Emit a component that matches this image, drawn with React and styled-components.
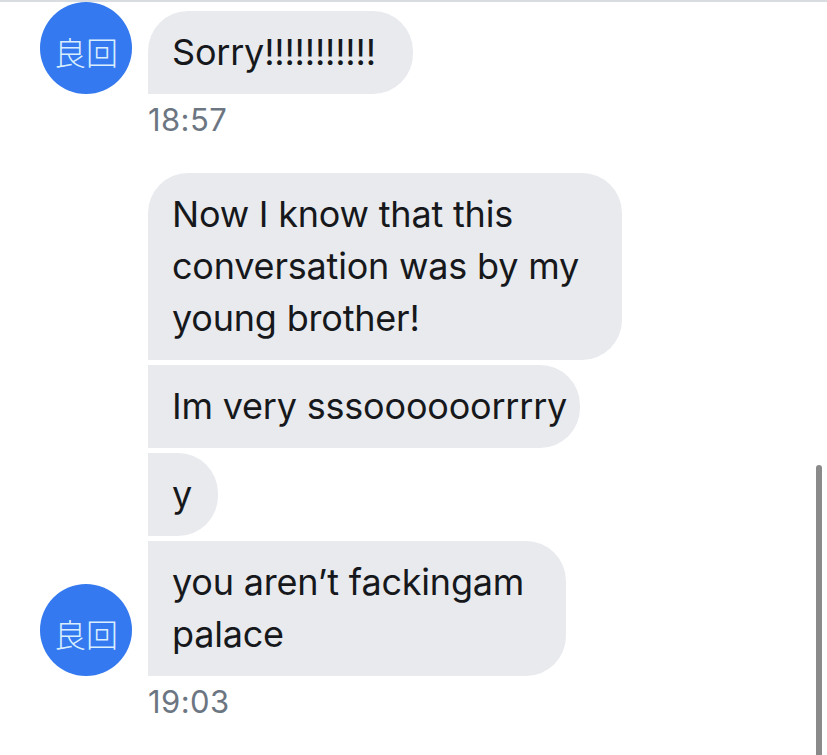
import React from "react";
import styled, { createGlobalStyle } from "styled-components";

const Global = createGlobalStyle`
  html, body {
    margin: 0;
    padding: 0;
    background: #ffffff;
    overflow: hidden;
  }
  body {
    font-family: Inter, "Noto Sans", "Liberation Sans", sans-serif;
    -webkit-font-smoothing: antialiased;
  }
`;

const Screen = styled.div`
  position: relative;
  width: 827px;
  height: 755px;
  box-sizing: border-box;
  border-top: 2px solid #d9dde2;
  display: flex;
  flex-direction: column;
  gap: 35px;
  overflow: hidden;
`;

const Group = styled.div`
  display: flex;
  flex-direction: column;
`;

const Row = styled.div`
  display: flex;
  align-items: flex-end;
  gap: 16px;
  padding-left: 40px;
`;

const Avatar = styled.div`
  flex: 0 0 auto;
  width: 92px;
  height: 92px;
  border-radius: 50%;
  background: #3479ef;
  color: #d9eeff;
  display: flex;
  align-items: center;
  justify-content: center;
  font-family: "Noto Sans CJK JP", "Noto Sans CJK SC", sans-serif;
  font-weight: 300;
  font-size: 32px;
  line-height: 1;
  padding-top: 6px;
  box-sizing: border-box;
`;

const Stack = styled.div`
  display: flex;
  flex-direction: column;
  align-items: flex-start;
  gap: 5px;
`;

const Bubble = styled.div`
  box-sizing: border-box;
  width: ${(p) => p.$width}px;
  background: #e8eaee;
  color: #16181b;
  font-size: 36px;
  line-height: 52px;
  padding: 15px 0 16px 24px;
  border-radius: ${(p) => (p.$first ? "40px" : "0")} 40px 40px 0;
  white-space: nowrap;
  letter-spacing: -0.2px;
`;

const Line = styled.div``;

const Time = styled.div`
  margin-top: 8px;
  padding-left: 148px;
  font-size: 31px;
  line-height: 36px;
  color: #6c7682;
  letter-spacing: 0.4px;
`;

const ScrollThumb = styled.div`
  position: absolute;
  right: 5px;
  top: 463px;
  bottom: 0;
  width: 6px;
  border-radius: 3px 3px 0 0;
  background: #8a8a8a;
`;

const groups = [
  {
    time: "18:57",
    messages: [{ w: 265, lines: ["Sorry!!!!!!!!!!!"] }],
  },
  {
    time: "19:03",
    messages: [
      {
        w: 474,
        lines: ["Now I know that this", "conversation was by my", "young brother!"],
      },
      { w: 432, lines: ["Im very sssoooooorrrry"] },
      { w: 70, lines: ["y"] },
      { w: 418, lines: ["you aren\u2019t fackingam", "palace"] },
    ],
  },
];

export default function App() {
  return (
    <>
      <Global />
      <Screen>
        {groups.map((g, gi) => (
          <Group key={gi}>
            <Row>
              <Avatar>良回</Avatar>
              <Stack>
                {g.messages.map((m, mi) => (
                  <Bubble key={mi} $first={mi === 0} $width={m.w}>
                    {m.lines.map((l, li) => (
                      <Line key={li}>{l}</Line>
                    ))}
                  </Bubble>
                ))}
              </Stack>
            </Row>
            <Time>{g.time}</Time>
          </Group>
        ))}
        <ScrollThumb />
      </Screen>
    </>
  );
}
